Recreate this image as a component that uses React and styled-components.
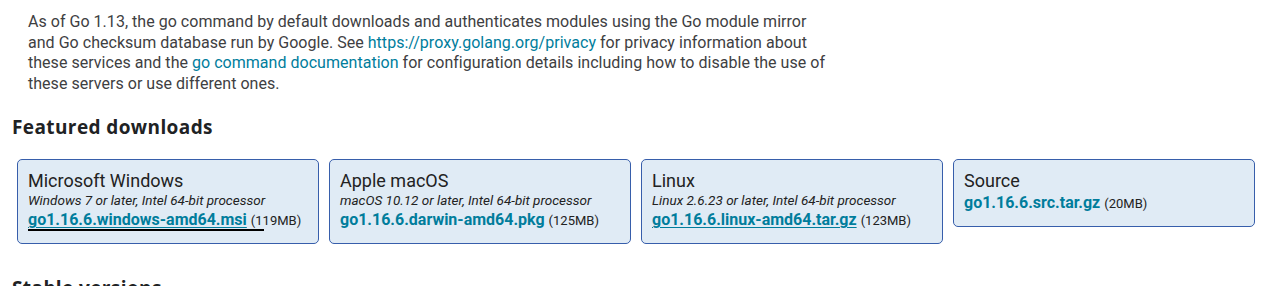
// Go downloads page: intro text + featured download cards
import React from "react";
import styled, { createGlobalStyle } from "styled-components";

const GlobalStyle = createGlobalStyle`
  body {
    margin: 0;
    background: #fff;
    font-family: Roboto, "Liberation Sans", sans-serif;
    color: #3e4042;
  }
`;

// page wrapper
const Page = styled.div`
  padding: 12px 12px 0 12px;
`;

// intro paragraph
const Intro = styled.p`
  margin: 0 0 0 16px;
  width: 802px;
  font-size: 16px;
  line-height: 20.6px;
  letter-spacing: 0.03px;
`;

const Link = styled.a`
  color: #007d9c;
  text-decoration: none;
`;

// section headings
const Heading = styled.h2`
  margin: ${(p) => p.$top || 22}px 0 0 0;
  font-family: "Open Sans", "DejaVu Sans", sans-serif;
  font-weight: 700;
  font-size: 19px;
  line-height: 26px;
  letter-spacing: 0.4px;
  color: #202224;
`;

// featured cards row
const Cards = styled.div`
  display: flex;
  align-items: flex-start;
  gap: 10px;
  margin: 19px 0 0 5px;
`;

const Card = styled.div`
  box-sizing: border-box;
  width: 302px;
  padding: 10px 10px 11px 10px;
  background: #e0ebf5;
  border: 1px solid #375eab;
  border-radius: 5px;
  color: #222;
`;

const Platform = styled.div`
  font-size: 18px;
  line-height: 22px;
`;

const Requirement = styled.div`
  font-size: 13.5px;
  font-style: italic;
  line-height: 17px;
`;

const FileLine = styled.div`
  line-height: 22px;
  white-space: nowrap;
`;

const FileName = styled.a`
  position: relative;
  color: #007d9c;
  font-weight: 700;
  font-size: 16px;
  text-decoration: ${(p) => (p.$underline ? "underline" : "none")};
  text-underline-offset: 2px;

  /* focus bar under the first link */
  ${(p) =>
    p.$focused &&
    `
    &::after {
      content: "";
      position: absolute;
      left: 0;
      right: -17px;
      bottom: -2px;
      height: 2px;
      background: #000;
    }
  `}
`;

const Size = styled.span`
  font-size: 13px;
  color: #222;
  margin-left: 4px;
`;

const downloads = [
  {
    os: "Microsoft Windows",
    req: "Windows 7 or later, Intel 64-bit processor",
    file: "go1.16.6.windows-amd64.msi",
    size: "119MB",
    underline: true,
    focused: true,
  },
  {
    os: "Apple macOS",
    req: "macOS 10.12 or later, Intel 64-bit processor",
    file: "go1.16.6.darwin-amd64.pkg",
    size: "125MB",
  },
  {
    os: "Linux",
    req: "Linux 2.6.23 or later, Intel 64-bit processor",
    file: "go1.16.6.linux-amd64.tar.gz",
    size: "123MB",
    underline: true,
  },
  {
    os: "Source",
    file: "go1.16.6.src.tar.gz",
    size: "20MB",
  },
];

const App = () => {
  return (
    <>
      <GlobalStyle />
      <Page>
        <Intro>
          As of Go 1.13, the go command by default downloads and authenticates
          modules using the Go module mirror and Go checksum database run by
          Google. See <Link href="#">https://proxy.golang.org/privacy</Link>{" "}
          for privacy information about these services and the{" "}
          <Link href="#">go command documentation</Link> for configuration
          details including how to disable the use of these servers or use
          different ones.
        </Intro>
        <Heading $top={20}>Featured downloads</Heading>
        <Cards>
          {downloads.map((d) => (
            <Card key={d.file}>
              <Platform>{d.os}</Platform>
              {d.req && <Requirement>{d.req}</Requirement>}
              <FileLine>
                <FileName
                  href="#"
                  $underline={d.underline}
                  $focused={d.focused}
                >
                  {d.file}
                </FileName>
                <Size>({d.size})</Size>
              </FileLine>
            </Card>
          ))}
        </Cards>
        <Heading $top={31}>Stable versions</Heading>
      </Page>
    </>
  );
};

export default App;
